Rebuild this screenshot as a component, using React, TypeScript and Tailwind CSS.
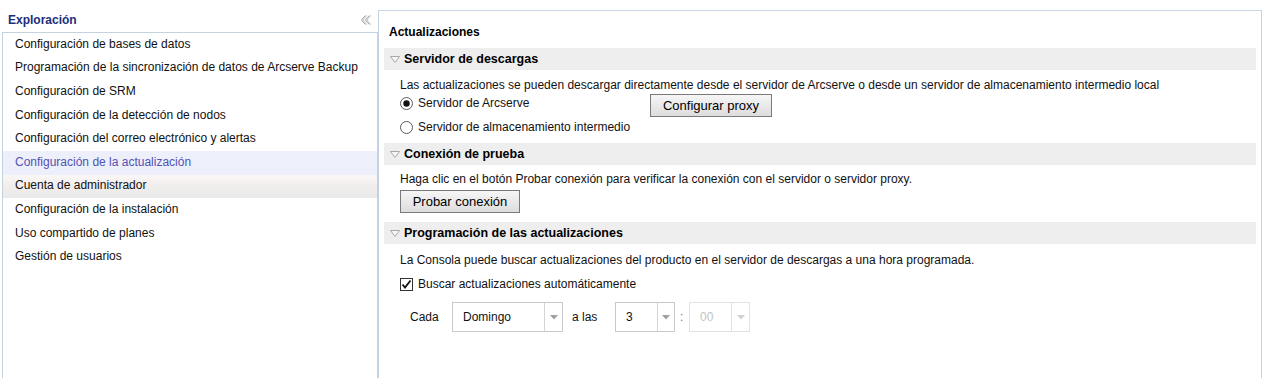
import React from "react";

const menu = [
  "Configuración de bases de datos",
  "Programación de la sincronización de datos de Arcserve Backup",
  "Configuración de SRM",
  "Configuración de la detección de nodos",
  "Configuración del correo electrónico y alertas",
  "Configuración de la actualización",
  "Cuenta de administrador",
  "Configuración de la instalación",
  "Uso compartido de planes",
  "Gestión de usuarios",
];

function CollapseIcon() {
  return (
    <svg width="12" height="10" viewBox="0 0 12 10">
      <polyline points="5.5,0.5 1.5,5 5.5,9.5" fill="none" stroke="#9a9a9a" strokeWidth="1" />
      <polyline points="7,0.5 3,5 7,9.5" fill="none" stroke="#c8c8c8" strokeWidth="1" />
      <polyline points="9.5,0.5 5.5,5 9.5,9.5" fill="none" stroke="#9a9a9a" strokeWidth="1" />
      <polyline points="11,0.5 7,5 11,9.5" fill="none" stroke="#c8c8c8" strokeWidth="1" />
    </svg>
  );
}

function Triangle() {
  return (
    <svg width="10" height="7" viewBox="0 0 10 7">
      <polygon points="0.5,0.5 9.5,0.5 5,6.5" fill="#f6f6f6" stroke="#a8a8a8" strokeWidth="1" />
    </svg>
  );
}

function SectionHeader({ title }: { title: string }) {
  return (
    <div className="flex h-[22px] items-center bg-[#eeeeee] pl-[6px]">
      <Triangle />
      <span className="ml-[4px] text-[12.5px] font-bold text-black">{title}</span>
    </div>
  );
}

function Radio({ checked, label }: { checked?: boolean; label: string }) {
  return (
    <div className="flex h-[20px] items-center">
      <svg width="13" height="13" viewBox="0 0 13 13">
        <circle cx="6.5" cy="6.5" r="6" fill="#fff" stroke="#5a5a5a" strokeWidth="1" />
        {checked && <circle cx="6.5" cy="6.5" r="3.2" fill="#111" />}
      </svg>
      <span className="ml-[5px] text-[12px] text-[#111]">{label}</span>
    </div>
  );
}

function Button({ label, w }: { label: string; w: string }) {
  return (
    <div
      className={`${w} flex h-[23px] items-center justify-center border border-[#7a7a7a] bg-gradient-to-b from-[#f6f6f6] to-[#dddddd] text-[13px] text-black`}
    >
      {label}
    </div>
  );
}

function Combo({
  value,
  w,
  arrowW,
  disabled,
}: {
  value: string;
  w: string;
  arrowW: string;
  disabled?: boolean;
}) {
  return (
    <div
      className={`${w} flex h-[30px] border ${disabled ? "border-[#e2e2e2] text-[#c4c4c4]" : "border-[#c9c9c9] text-[#111]"} bg-white`}
    >
      <div className="flex flex-1 items-center pl-[10px] text-[12px]">{value}</div>
      <div
        className={`${arrowW} flex items-center justify-center border-l ${disabled ? "border-[#e2e2e2]" : "border-[#d4d4d4]"}`}
      >
        <svg width="8" height="5" viewBox="0 0 8 5">
          <polygon points="0,0 8,0 4,4.5" fill={disabled ? "#d0d0d0" : "#a0a0a0"} />
        </svg>
      </div>
    </div>
  );
}

export default function App() {
  return (
    <div
      className="flex h-[378px] w-[1263px] overflow-hidden bg-white"
      style={{ fontFamily: '"Liberation Sans", Arial, sans-serif' }}
    >
      {/* Left navigation */}
      <div className="flex w-[378px] flex-col">
        <div className="flex h-[32px] items-center justify-between pl-[8px] pr-[6px] pt-[7px]">
          <span className="text-[12px] font-bold text-[#1a2f7d]">Exploración</span>
          <CollapseIcon />
        </div>
        <div className="ml-[2px] flex-1 border-l border-r border-t border-[#c3d2e1] pt-[0px]">
          {menu.map((m, i) => (
            <div
              key={m}
              className={`flex h-[23.6px] items-center pb-[2px] pl-[12px] text-[12px] ${
                i === 5
                  ? "bg-[#edf0fb] text-[#5252b4]"
                  : i === 6
                    ? "bg-gradient-to-b from-[#fbf7f7] via-[#f1eded] to-[#e9e9e9] text-[#111]"
                    : "text-[#111]"
              }`}
            >
              {m}
            </div>
          ))}
        </div>
      </div>

      {/* Right content */}
      <div className="mr-[1px] mt-[10px] flex-1 border-l border-r border-t border-l-[#c3d2e1] border-r-[#cfcfcf] border-t-[#c9d6e3]">
        <div className="h-[37px] pl-[10px] pt-[13px] text-[12px] font-bold leading-[16px] text-black">
          Actualizaciones
        </div>
        <div className="px-[5px]">
          <SectionHeader title="Servidor de descargas" />
          <div className="pb-[6px] pl-[16px] pt-[7px]">
            <div className="text-[12px] leading-[16px] text-[#111]">
              Las actualizaciones se pueden descargar directamente desde el servidor de Arcserve o desde un servidor de almacenamiento intermedio local
            </div>
            <div className="flex h-[24px] items-start">
              <div className="w-[250px]">
                <Radio checked label="Servidor de Arcserve" />
              </div>
              <div className="mt-[1px]">
                <Button label="Configurar proxy" w="w-[122px]" />
              </div>
            </div>
            <Radio label="Servidor de almacenamiento intermedio" />
          </div>

          <SectionHeader title="Conexión de prueba" />
          <div className="pb-[9px] pl-[16px] pt-[6px]">
            <div className="text-[12px] leading-[16px] text-[#111]">
              Haga clic en el botón Probar conexión para verificar la conexión con el servidor o servidor proxy.
            </div>
            <div className="mt-[3px]">
              <Button label="Probar conexión" w="w-[120px]" />
            </div>
          </div>

          <SectionHeader title="Programación de las actualizaciones" />
          <div className="pl-[16px] pt-[8px]">
            <div className="text-[12px] leading-[16px] text-[#111]">
              La Consola puede buscar actualizaciones del producto en el servidor de descargas a una hora programada.
            </div>
            <div className="mt-[8px] flex h-[16px] items-center">
              <svg width="13" height="13" viewBox="0 0 13 13">
                <rect x="0.5" y="0.5" width="12" height="12" fill="#fff" stroke="#333" strokeWidth="1" />
                <polyline points="2.5,6.5 5,9.5 10.5,2.5" fill="none" stroke="#111" strokeWidth="1.8" />
              </svg>
              <span className="ml-[5px] text-[12px] text-[#111]">Buscar actualizaciones automáticamente</span>
            </div>
            <div className="mt-[10px] flex items-center pl-[10px] text-[12px] text-[#111]">
              <span className="w-[42px]">Cada</span>
              <Combo value="Domingo" w="w-[111px]" arrowW="w-[18px]" />
              <span className="ml-[9px] w-[43px]">a las</span>
              <Combo value="3" w="w-[60px]" arrowW="w-[17px]" />
              <span className="ml-[5px] w-[9px] text-[#777]">:</span>
              <Combo value="00" w="w-[61px]" arrowW="w-[18px]" disabled />
            </div>
          </div>
        </div>
      </div>
    </div>
  );
}
